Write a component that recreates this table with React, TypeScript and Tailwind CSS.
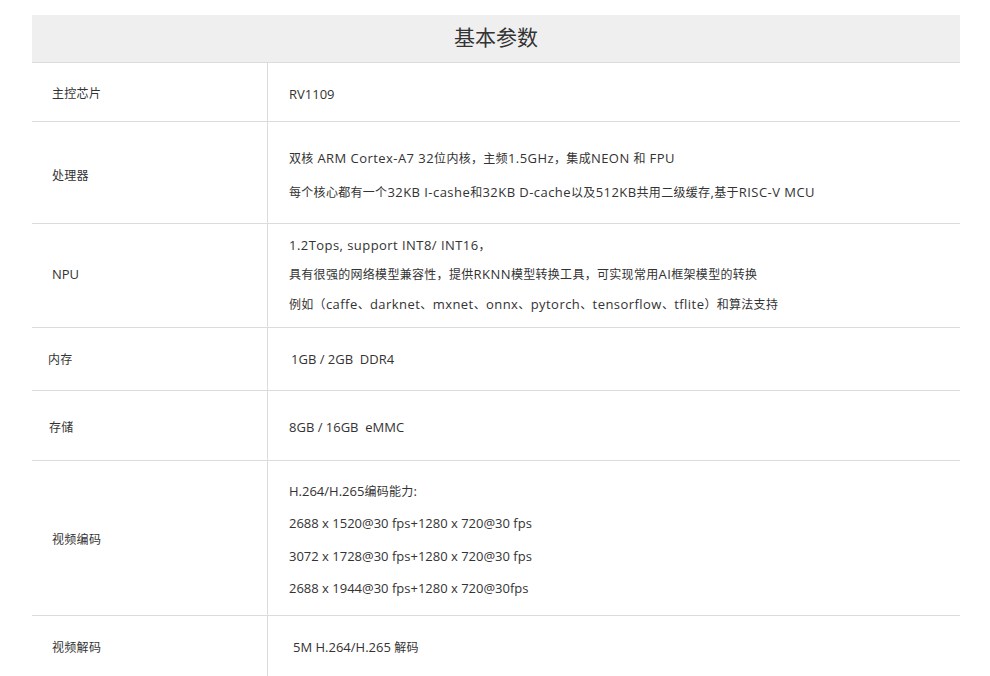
import React from "react";

type Row = {
  label: string;
  lines: string[];
  h: string;
  gap: string;
  shift: string;
  wide?: boolean;
  labelPad?: string;
  valuePad?: string;
};

const rows: Row[] = [
  { label: "主控芯片", lines: ["RV1109"], h: "h-[59px]", gap: "gap-0", shift: "pt-[4px]" },
  {
    label: "处理器",
    lines: [
      "双核 ARM Cortex-A7 32位内核，主频1.5GHz，集成NEON 和 FPU",
      "每个核心都有一个32KB I-cashe和32KB D-cache以及512KB共用二级缓存,基于RISC-V MCU",
    ],
    h: "h-[102px]",
    gap: "gap-[13px]",
    shift: "pt-[6px]",
    wide: true,
  },
  {
    label: "NPU",
    lines: [
      "1.2Tops, support INT8/ INT16，",
      "具有很强的网络模型兼容性，提供RKNN模型转换工具，可实现常用AI框架模型的转换",
      "例如（caffe、darknet、mxnet、onnx、pytorch、tensorflow、tflite）和算法支持",
    ],
    h: "h-[104px]",
    gap: "gap-[8.5px]",
    shift: "pb-[2px]",
    wide: true,
  },
  { label: "内存", lines: ["1GB / 2GB  DDR4"], h: "h-[63px]", gap: "gap-0", shift: "pt-[1px]", labelPad: "pl-4", valuePad: "pl-[23px]" },
  { label: "存储", lines: ["8GB / 16GB  eMMC"], h: "h-[70px]", gap: "gap-0", shift: "pt-[4px]", labelPad: "pl-[17px]" },
  {
    label: "视频编码",
    lines: [
      "H.264/H.265编码能力:",
      "2688 x 1520@30 fps+1280 x 720@30 fps",
      "3072 x 1728@30 fps+1280 x 720@30 fps",
      "2688 x 1944@30 fps+1280 x 720@30fps",
    ],
    h: "h-[155px]",
    gap: "gap-[11.5px]",
    shift: "pt-[4px]",
  },
  { label: "视频解码", lines: ["5M H.264/H.265 解码"], h: "h-[64px]", gap: "gap-0", shift: "pt-0", valuePad: "pl-[25px]" },
];

const CJK = /[\u3000-\u303f\u4e00-\u9fff\uff00-\uffef]/;

function Mixed({ text, wide }: { text: string; wide?: boolean }) {
  const parts = text.split(/([\u3000-\u303f\u4e00-\u9fff\uff00-\uffef]+)/).filter(Boolean);
  return (
    <>
      {parts.map((p, i) =>
        CJK.test(p) ? (
          <span key={i} className="tracking-[0.3px]">
            {p}
          </span>
        ) : (
          <span key={i} className={wide ? "text-[13px] tracking-[0.45px]" : "text-[13px]"}>
            {p}
          </span>
        )
      )}
    </>
  );
}

export default function App() {
  return (
    <div
      className="w-[990px] h-[676px] overflow-hidden bg-white text-[#333]"
      style={{ fontFamily: '"Open Sans", "Noto Sans CJK SC", sans-serif' }}
    >
      <div className="ml-8 mt-[15px] w-[928px]">
        <div className="h-[48px] bg-[#efefef] border-b border-[#dcdcdc] flex items-center justify-center">
          <span className="text-[21px] leading-none text-[#333] -mt-[2px]">基本参数</span>
        </div>
        {rows.map((r) => (
          <div key={r.label} className={`${r.h} flex border-b border-[#dcdcdc]`}>
            <div className={`w-[235px] shrink-0 flex items-center text-[12px] ${r.shift} ${r.labelPad ?? "pl-5"}`}>
              <Mixed text={r.label} />
            </div>
            <div
              className={`flex-1 border-l border-[#dcdcdc] flex flex-col justify-center text-[12px] leading-5 whitespace-pre ${r.shift} ${r.gap} ${r.valuePad ?? "pl-[21px]"}`}
            >
              {r.lines.map((l, i) => (
                <div key={i}>
                  <Mixed text={l} wide={r.wide} />
                </div>
              ))}
            </div>
          </div>
        ))}
      </div>
    </div>
  );
}
